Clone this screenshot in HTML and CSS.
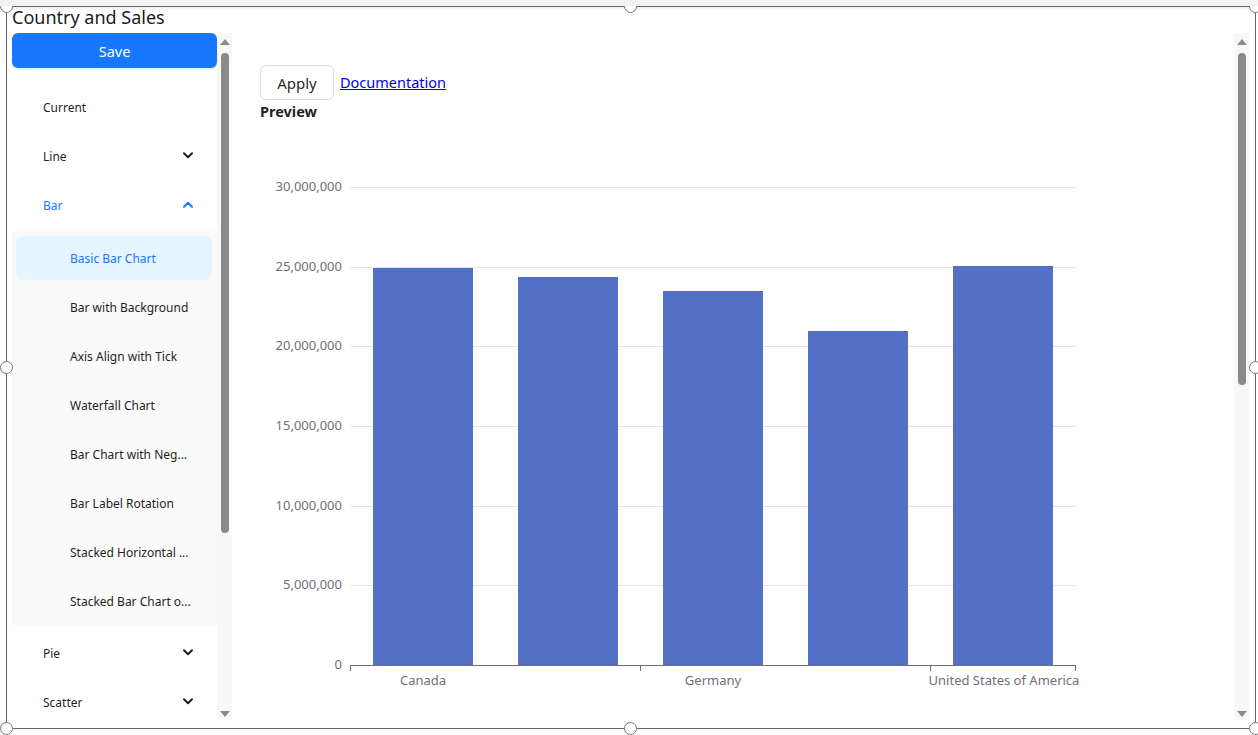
FILE: index.html
```html
<!DOCTYPE html>
<html lang="en">
<head>
<meta charset="utf-8">
<title>Country and Sales</title>
<link rel="stylesheet" href="styles.css">
</head>
<body>
<div class="page">
  <div class="topband"></div>
  <div class="frame">
    <div class="title">Country and Sales</div>
    <div class="body-row">
      <aside class="sidebar">
        <nav class="menu">
          <button class="save">Save</button>
          <ul class="items">
            <li class="item">Current</li>
            <li class="item">Line
              <svg class="chev" width="10" height="7" viewBox="0 0 10 7"><polyline points="1,1.2 5,5.2 9,1.2"/></svg>
            </li>
            <li class="item open">Bar
              <svg class="chev" width="10" height="7" viewBox="0 0 10 7"><polyline points="1,5.8 5,1.8 9,5.8"/></svg>
            </li>
            <li class="submenu">
              <ul class="subitems">
                <li class="subitem active">Basic Bar Chart</li>
                <li class="subitem">Bar with Background</li>
                <li class="subitem">Axis Align with Tick</li>
                <li class="subitem">Waterfall Chart</li>
                <li class="subitem">Bar Chart with Neg...</li>
                <li class="subitem">Bar Label Rotation</li>
                <li class="subitem">Stacked Horizontal ...</li>
                <li class="subitem">Stacked Bar Chart o...</li>
              </ul>
            </li>
            <li class="item">Pie
              <svg class="chev" width="10" height="7" viewBox="0 0 10 7"><polyline points="1,1.2 5,5.2 9,1.2"/></svg>
            </li>
            <li class="item">Scatter
              <svg class="chev" width="10" height="7" viewBox="0 0 10 7"><polyline points="1,1.2 5,5.2 9,1.2"/></svg>
            </li>
          </ul>
        </nav>
        <div class="vscroll">
          <div class="arrow arrow-up"></div>
          <div class="track"><div class="thumb thumb-left"></div></div>
          <div class="arrow arrow-down"></div>
        </div>
      </aside>
      <main class="main">
        <div class="content">
          <div class="toolbar">
            <button class="apply">Apply</button>
            <a class="doc" href="#">Documentation</a>
          </div>
          <div class="preview">Preview</div>
          <svg class="chart" width="840" height="590" viewBox="0 0 840 590">
            <g transform="translate(-260,-121)">
              <g class="grid">
                <line x1="350" y1="187.5" x2="1076" y2="187.5"/>
                <line x1="350" y1="267.5" x2="1076" y2="267.5"/>
                <line x1="350" y1="346.5" x2="1076" y2="346.5"/>
                <line x1="350" y1="426.5" x2="1076" y2="426.5"/>
                <line x1="350" y1="506.5" x2="1076" y2="506.5"/>
                <line x1="350" y1="585.5" x2="1076" y2="585.5"/>
              </g>
              <g class="bars">
                <rect x="373" y="268" width="100" height="397"/>
                <rect x="518" y="277" width="100" height="388"/>
                <rect x="663" y="291" width="100" height="374"/>
                <rect x="808" y="331" width="100" height="334"/>
                <rect x="953" y="266" width="100" height="399"/>
              </g>
              <g class="axis">
                <line x1="350" y1="665.5" x2="1076" y2="665.5"/>
                <line x1="350.5" y1="665" x2="350.5" y2="671"/>
                <line x1="640.5" y1="665" x2="640.5" y2="671"/>
                <line x1="930.5" y1="665" x2="930.5" y2="671"/>
                <line x1="1075.5" y1="665" x2="1075.5" y2="671"/>
              </g>
              <g class="ylabels">
                <text x="342" y="188">30,000,000</text>
                <text x="342" y="268">25,000,000</text>
                <text x="342" y="347">20,000,000</text>
                <text x="342" y="427">15,000,000</text>
                <text x="342" y="507">10,000,000</text>
                <text x="342" y="586">5,000,000</text>
                <text x="342" y="666">0</text>
              </g>
              <g class="xlabels">
                <text x="423" y="681.5">Canada</text>
                <text x="713" y="681.5">Germany</text>
                <text x="1004" y="681.5">United States of America</text>
              </g>
            </g>
          </svg>
        </div>
        <div class="vscroll vscroll-main">
          <div class="arrow arrow-up"></div>
          <div class="track"><div class="thumb thumb-main"></div></div>
          <div class="arrow arrow-down"></div>
        </div>
      </main>
    </div>
  </div>
  <span class="handle h-tl"></span>
  <span class="handle h-tm"></span>
  <span class="handle h-tr"></span>
  <span class="handle h-ml"></span>
  <span class="handle h-mr"></span>
  <span class="handle h-bl"></span>
  <span class="handle h-bm"></span>
  <span class="handle h-br"></span>
</div>
</body>
</html>
```

FILE: styles.css
```css
* { box-sizing: border-box; }
html, body { margin: 0; padding: 0; background: #fff; }
body {
  font-family: "Noto Sans", "Open Sans", sans-serif;
  color: #1f1f1f;
  overflow: hidden;
}
ul { list-style: none; margin: 0; padding: 0; }

.page {
  position: relative;
  width: 1258px;
  height: 735px;
  overflow: hidden;
}
.topband {
  position: relative;
  z-index: 2;
  height: 6px;
  background: #f3f3f3;
}
.frame {
  position: relative;
  margin-left: 6px;
  width: 1250px;
  height: 723px;
  border: 1px solid #666;
  box-shadow: inset 0 2px 3px rgba(0,0,0,0.06);
  display: flex;
  flex-direction: column;
}
.title {
  height: 26px;
  padding-left: 5px;
  font-size: 18px;
  line-height: 20px;
  color: #1b1b1b;
}
.body-row {
  display: flex;
  height: 687px;
  overflow: hidden;
}

/* sidebar */
.sidebar {
  display: flex;
  margin-left: 5px;
  width: 220px;
  flex: none;
}
.menu {
  width: 205px;
  display: flex;
  flex-direction: column;
  overflow: hidden;
}
.save {
  height: 35px;
  width: 100%;
  flex: none;
  border: none;
  border-radius: 6px;
  background: #1677ff;
  color: #fff;
  font-family: inherit;
  font-size: 14.5px;
  box-shadow: 0 2px 0 rgba(5,145,255,0.1);
  padding: 0;
}
.items {
  margin-top: 17px;
  display: flex;
  flex-direction: column;
  gap: 5px;
}
.item {
  height: 44px;
  flex: none;
  display: flex;
  align-items: center;
  justify-content: space-between;
  padding: 0 24px 0 31px;
  font-size: 12px;
  color: #1f1f1f;
}
.item.open { color: #1677ff; }
.chev { fill: none; stroke: #1f1f1f; stroke-width: 2; stroke-linecap: round; stroke-linejoin: round; margin-top: -2px; }
.item.open .chev { stroke: #1677ff; }
.submenu {
  background: #fafafa;
  margin-top: -1px;
  padding: 5px 0 3px;
}
.subitems {
  display: flex;
  flex-direction: column;
  gap: 5px;
}
.subitem {
  height: 44px;
  margin: 0 5px 0 4px;
  padding-left: 54px;
  display: flex;
  align-items: center;
  font-size: 12px;
  color: #1f1f1f;
  border-radius: 8px;
  white-space: nowrap;
}
.subitem.active {
  background: #e6f4ff;
  color: #1677ff;
}

/* scrollbars */
.vscroll {
  width: 15px;
  flex: none;
  display: flex;
  flex-direction: column;
  background: #f8f8f8;
}
.vscroll-main { margin-right: 6px; }
.arrow {
  display: flex;
  justify-content: center;
  align-items: center;
  flex: none;
}
.arrow-up { height: 17px; }
.arrow-down { height: 13px; }
.arrow-up::after {
  content: "";
  border-left: 5px solid transparent;
  border-right: 5px solid transparent;
  border-bottom: 6px solid #8a8a8a;
}
.arrow-down::after {
  content: "";
  border-left: 5px solid transparent;
  border-right: 5px solid transparent;
  border-top: 6px solid #8a8a8a;
}
.track { flex: 1; padding: 3px 0 0 4px; }
.thumb {
  width: 8px;
  border-radius: 4px;
  background: #8a8a8a;
}
.thumb-left { height: 480px; }
.thumb-main { height: 332px; }

/* main */
.main {
  flex: 1;
  display: flex;
  min-width: 0;
}
.content {
  flex: 1;
  padding: 32px 0 0 28px;
  overflow: hidden;
}
.toolbar {
  display: flex;
  align-items: center;
  gap: 6px;
}
.apply {
  width: 74px;
  height: 35px;
  border: 1px solid #d9d9d9;
  border-radius: 6px;
  background: #fff;
  font-family: inherit;
  font-size: 15px;
  color: #2b2b2b;
  padding: 0;
}
.doc {
  font-size: 14.5px;
  color: #0000ee;
  text-decoration: underline;
  margin-top: -2px;
}
.preview {
  margin-top: 1px;
  font-size: 14.5px;
  font-weight: 700;
  line-height: 20px;
  color: #1f1f1f;
}
.chart { display: block; }
.grid line { stroke: #e0e6f1; stroke-width: 1; }
.bars rect { fill: #5470c6; }
.axis line { stroke: #6e7079; stroke-width: 1; }
.ylabels text, .xlabels text {
  font-family: "Noto Sans", sans-serif;
  font-size: 13px;
  fill: #6e7079;
  dominant-baseline: middle;
}
.ylabels text { text-anchor: end; }
.xlabels text { text-anchor: middle; }

/* selection handles */
.handle {
  position: absolute;
  z-index: 1;
  width: 13px;
  height: 13px;
  border: 1px solid #777;
  border-radius: 50%;
  background: #fff;
}
.h-tl { left: 0; top: 0; }
.h-tm { left: 624px; top: 0; }
.h-tr { left: 1249px; top: 0; }
.h-ml { left: 0; top: 361px; }
.h-mr { left: 1249px; top: 361px; }
.h-bl { left: 0; top: 722px; }
.h-bm { left: 624px; top: 722px; }
.h-br { left: 1249px; top: 722px; }
```
